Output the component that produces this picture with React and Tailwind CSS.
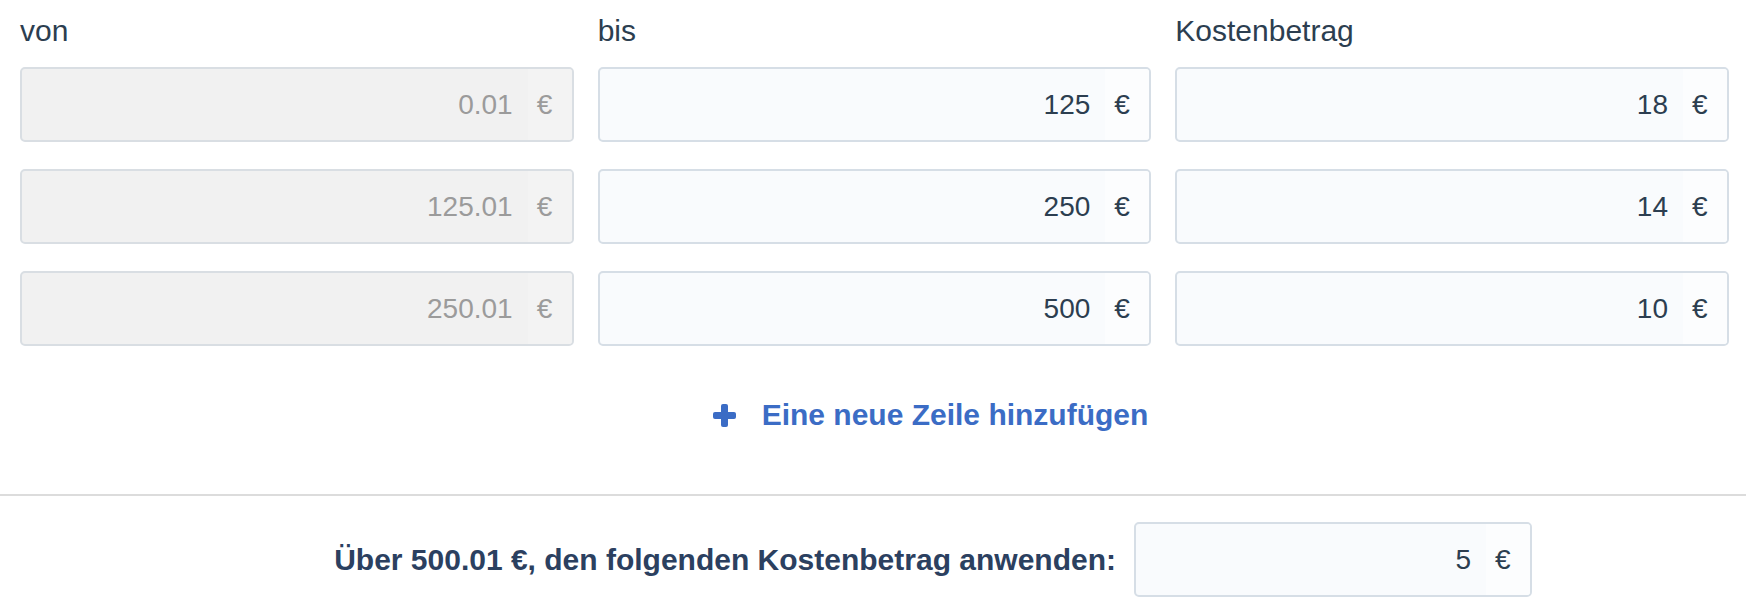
import React from "react";

const rows = [
  { von: "0.01", bis: "125", kosten: "18" },
  { von: "125.01", bis: "250", kosten: "14" },
  { von: "250.01", bis: "500", kosten: "10" },
];

function Field({ value, disabled, className = "" }) {
  return (
    <div
      className={
        "flex h-[75px] items-stretch overflow-hidden rounded-[5px] border-2 " +
        (disabled
          ? "border-[#d9dee3] bg-[#f1f1f1] text-[#9b9b9b]"
          : "border-[#d6dee6] bg-[#f9fbfd] text-[#2c3e50]") +
        " " +
        className
      }
    >
      <div className="flex flex-1 items-center justify-end pr-[15px] text-[28px] leading-[34px]">
        {value}
      </div>
      <div
        className={
          "flex w-[44px] items-center pl-[9px] text-[28px] leading-[34px] " +
          (disabled ? "bg-[#f3f3f3]" : "bg-[#fcfdfe]")
        }
      >
        €
      </div>
    </div>
  );
}

export default function App() {
  return (
    <div
      className="h-[604px] w-[1746px] overflow-hidden bg-white"
      style={{ fontFamily: '"Liberation Sans", Arial, sans-serif' }}
    >
      <div className="pl-[20px] pr-[17px] pt-[14px]">
        <div className="grid grid-cols-3 gap-x-[24px]">
          <div className="text-[30px] leading-[34px] text-[#2c3e50]">von</div>
          <div className="text-[30px] leading-[34px] text-[#2c3e50]">bis</div>
          <div className="text-[30px] leading-[34px] text-[#2c3e50]">Kostenbetrag</div>
        </div>
        <div className="mt-[19px] grid grid-cols-3 gap-x-[24px] gap-y-[27px]">
          {rows.map((r, i) => (
            <React.Fragment key={i}>
              <Field value={r.von} disabled />
              <Field value={r.bis} />
              <Field value={r.kosten} />
            </React.Fragment>
          ))}
        </div>
        <div className="mt-[52px] flex items-center justify-center gap-[26px] pl-[112px] text-[#3b6cc5]">
          <svg width="23" height="23" viewBox="0 0 23 23">
            <rect x="8" y="0" width="7" height="23" rx="2" fill="currentColor" />
            <rect x="0" y="8" width="23" height="7" rx="2" fill="currentColor" />
          </svg>
          <span className="text-[30px] font-bold leading-[34px]">Eine neue Zeile hinzufügen</span>
        </div>
      </div>
      <div className="mt-[62px] h-[2px] w-full bg-[#dcdcdc]" />
      <div className="flex items-center pt-[26px]">
        <div className="w-[1116px] text-right text-[30px] font-bold leading-[34px] text-[#2b4060]">
          Über 500.01 €, den folgenden Kostenbetrag anwenden:
        </div>
        <Field value="5" className="ml-[18px] w-[398px]" />
      </div>
    </div>
  );
}
